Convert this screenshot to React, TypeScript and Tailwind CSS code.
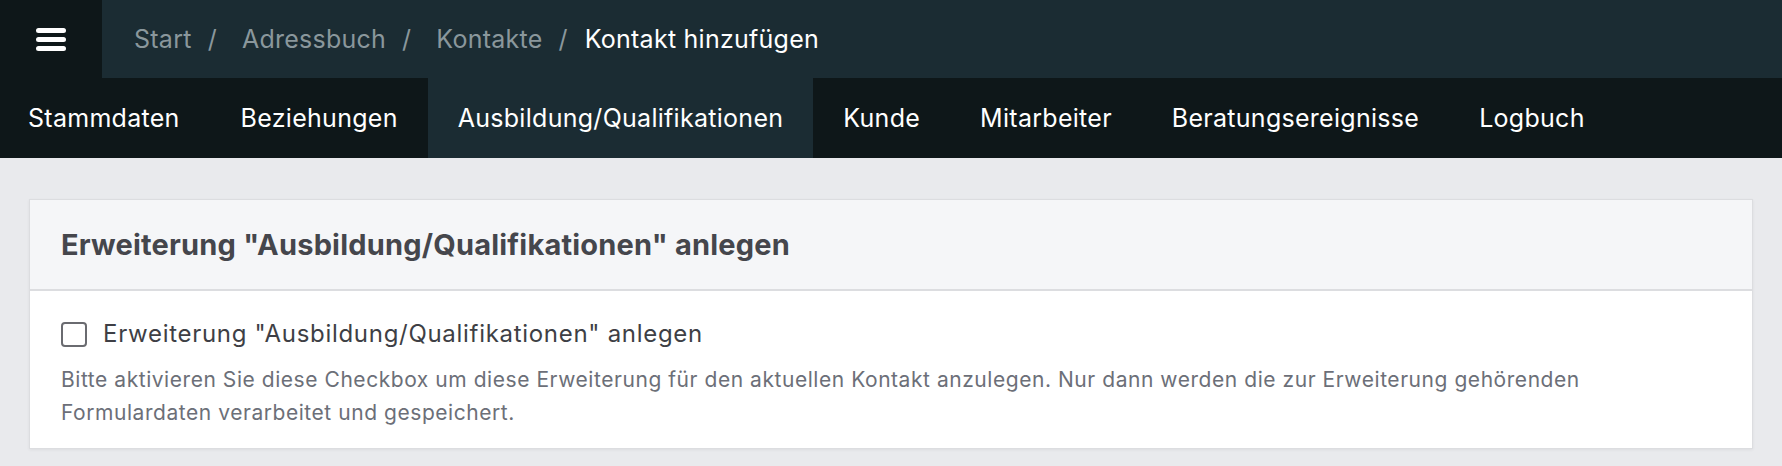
import React from "react";

const crumbs = ["Start", "Adressbuch", "Kontakte"];
const tabs = [
  "Stammdaten",
  "Beziehungen",
  "Ausbildung/Qualifikationen",
  "Kunde",
  "Mitarbeiter",
  "Beratungsereignisse",
  "Logbuch",
];

export default function App() {
  return (
    <div
      className="min-h-screen bg-[#e9eaed] antialiased"
      style={{ fontFamily: "Inter, 'Noto Sans', 'Liberation Sans', sans-serif" }}
    >
      <header className="flex h-[78px] bg-[#1b2c33]">
        <button className="flex w-[102px] items-center justify-center bg-[#0e1719]">
          <span className="flex w-[30px] flex-col gap-[4px]">
            <span className="h-[5px] rounded-full bg-white" />
            <span className="h-[5px] rounded-full bg-white" />
            <span className="h-[5px] rounded-full bg-white" />
          </span>
        </button>
        <nav className="flex items-center pl-[32px] text-[25px] leading-none tracking-[0.25px]">
          {crumbs.map((c, i) => (
            <React.Fragment key={c}>
              <span className="text-[#8a979c]">{c}</span>
              <span
                className={
                  "ml-[16px] text-[#8a979c] " + (i === crumbs.length - 1 ? "mr-[17px]" : "mr-[25px]")
                }
              >
                /
              </span>
            </React.Fragment>
          ))}
          <span className="text-white">Kontakt hinzufügen</span>
        </nav>
      </header>

      <div className="flex h-[80px] bg-[#0e1719]">
        {tabs.map((t, i) => (
          <div
            key={t}
            className={
              "flex items-center pt-[1px] text-[25px] tracking-[0.28px] text-white " +
              (i === 0 ? "pl-[28px] pr-[31px] " : "px-[30px] ") +
              (i === 2 ? "bg-[#1b2c33]" : "")
            }
          >
            {t}
          </div>
        ))}
      </div>

      <main className="px-[29px] pt-[41px]">
        <section className="border border-[#dcdde0] bg-white shadow-[0_1px_3px_rgba(0,0,0,0.06)]">
          <div className="flex h-[91px] items-center border-b-2 border-[#dcdde0] bg-[#f5f6f8] px-[31px] pt-[1px]">
            <h2 className="text-[29px] font-bold tracking-[0.2px] text-[#45464c]">
              Erweiterung "Ausbildung/Qualifikationen" anlegen
            </h2>
          </div>
          <div className="px-[31px] pb-[19px] pt-[26px]">
            <label className="flex h-[34px] items-center gap-[16px]">
              <span className="h-[25px] w-[26px] rounded-[4px] border-2 border-[#6a6b70] bg-white" />
              <span className="text-[24px] tracking-[0.7px] text-[#3e3f45]">
                Erweiterung "Ausbildung/Qualifikationen" anlegen
              </span>
            </label>
            <p className="mt-[12px] whitespace-nowrap text-[21px] leading-[33px] tracking-[0.55px] text-[#6c6f78]">
              Bitte aktivieren Sie diese Checkbox um diese Erweiterung für den aktuellen Kontakt anzulegen. Nur dann werden die zur Erweiterung gehörenden
              <br />
              Formulardaten verarbeitet und gespeichert.
            </p>
          </div>
        </section>
      </main>
    </div>
  );
}
